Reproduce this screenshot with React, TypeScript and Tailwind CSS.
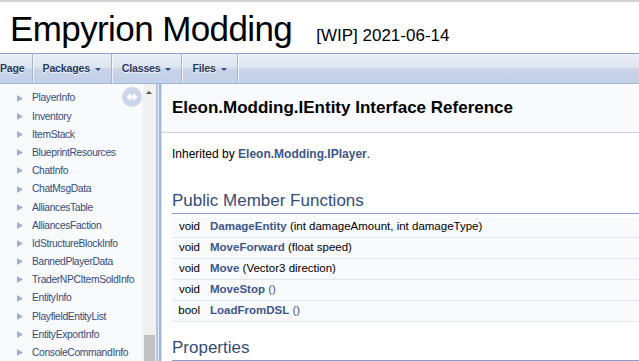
import React from 'react';

const treeItems = [
  'PlayerInfo',
  'Inventory',
  'ItemStack',
  'BlueprintResources',
  'ChatInfo',
  'ChatMsgData',
  'AlliancesTable',
  'AlliancesFaction',
  'IdStructureBlockInfo',
  'BannedPlayerData',
  'TraderNPCItemSoldInfo',
  'EntityInfo',
  'PlayfieldEntityList',
  'EntityExportInfo',
  'ConsoleCommandInfo',
];

const members = [
  { type: 'void', name: 'DamageEntity', args: '(int damageAmount, int damageType)' },
  { type: 'void', name: 'MoveForward', args: '(float speed)' },
  { type: 'void', name: 'Move', args: '(Vector3 direction)' },
  { type: 'void', name: 'MoveStop', args: '()' },
  { type: 'bool', name: 'LoadFromDSL', args: '()' },
];

const tabs = [
  { label: 'Page', first: true },
  { label: 'Packages', caret: true },
  { label: 'Classes', caret: true },
  { label: 'Files', caret: true },
];

export default function App() {
  return (
    <div className="w-[639px] h-[361px] overflow-hidden bg-white text-black font-['Liberation_Sans',Arial,sans-serif] flex flex-col">
      <div className="h-[2px] shrink-0 bg-[#d3d3d3]" />

      {/* Project title */}
      <div className="h-[51px] shrink-0 flex items-baseline pl-[10px] pt-[9px] whitespace-nowrap">
        <span className="text-[35px] leading-none tracking-[-0.6px]">Empyrion Modding</span>
        <span className="ml-[24px] text-[17px] leading-none">[WIP] 2021-06-14</span>
      </div>

      {/* Tabs bar */}
      <nav className="h-[31px] shrink-0 flex items-stretch overflow-hidden border-y border-t-[#8ea2cb] border-b-[#a7b7da] bg-[linear-gradient(to_bottom,#eaeef7_0%,#dde3f1_48%,#c9d4ea_52%,#c3cfe7_100%)] text-[10.6px] tracking-[-0.2px] font-bold text-[#283A5D] [text-shadow:0_1px_1px_rgba(255,255,255,0.9)]">
        {tabs.map((tab) => (
          <div
            key={tab.label}
            className={`flex items-center border-r border-[#a3b4d8] shadow-[1px_0_0_rgba(255,255,255,0.7)] ${
              tab.first ? 'pr-[7px]' : 'px-[10px]'
            }`}
          >
            <span>{tab.label}</span>
            {tab.caret && (
              <span className="ml-[5px] mt-[1px] w-0 h-0 border-x-[3px] border-x-transparent border-t-[3px] border-t-[#364D7C]" />
            )}
          </div>
        ))}
      </nav>

      <div className="flex-1 min-h-0 flex">
        {/* Nav tree */}
        <div className="w-[156px] shrink-0 flex bg-[#f9fafc] relative">
          <ul className="w-[143px] pt-[5px] overflow-hidden text-[10.3px] tracking-[-0.35px] text-[#364D7C]">
            {treeItems.map((item) => (
              <li key={item} className="h-[18.2px] flex items-center whitespace-nowrap">
                <svg width="6" height="7" viewBox="0 0 6 7" className="ml-[17px] shrink-0">
                  <polygon points="0,0 6,3.5 0,7" fill="#9CAFD4" />
                </svg>
                <span className="ml-[9px]">{item}</span>
              </li>
            ))}
          </ul>
          <div className="w-[13px] shrink-0 bg-[#f0f0f0] relative">
            <div className="absolute top-[7px] left-[3px] w-0 h-0 border-x-[3px] border-x-transparent border-b-[3px] border-b-[#505050]" />
            <div className="absolute bottom-0 left-[1px] right-[1px] h-[26px] bg-[#c1c1c1]" />
          </div>
          <svg width="20" height="20" viewBox="0 0 20 20" className="absolute left-[122px] top-[3px]">
            <circle cx="10" cy="10" r="10" fill="#cbd5eb" />
            <path d="M4.5 10 L8.5 6 V8.5 H11.5 V6 L15.5 10 L11.5 14 V11.5 H8.5 V14 Z" fill="#ffffff" />
          </svg>
        </div>

        {/* Split bar */}
        <div className="w-[6px] shrink-0 bg-[linear-gradient(to_right,#b8c6e3_0px,#b8c6e3_2px,#e4eaf5_2px,#e4eaf5_3px,#a2b4d9_3px,#a2b4d9_5px,#d6deef_5px,#d6deef_6px)]" />

        {/* Contents */}
        <div className="flex-1 min-w-0 flex flex-col whitespace-nowrap">
          <div className="h-[49px] shrink-0 flex items-center pl-[10px] bg-[#f9fafc] border-b border-[#c4cfe5] text-[17px] font-bold">
            Eleon.Modding.IEntity Interface Reference
          </div>

          <p className="mt-[13px] pl-[10px] text-[12px] leading-[16px]">
            Inherited by <a className="font-bold text-[#3D578C]">Eleon.Modding.IPlayer</a>.
          </p>

          <h2 className="mt-[29px] ml-[10px] pb-[2px] border-b border-[#879ECB] text-[17px] leading-[20px] text-[#354C7B]">
            Public Member Functions
          </h2>

          <div className="ml-[10px] mt-[3px]">
            {members.map((m) => (
              <div
                key={m.name}
                className="h-[21px] flex items-center bg-[#f9fafc] border-b border-[#dee4f0] text-[11.5px]"
              >
                <span className="w-[34px] shrink-0 pr-[6px] text-right">{m.type}</span>
                <span className="pl-[4px]">
                  <a className="font-bold text-[#3D578C]">{m.name}</a>{' '}
                  <span className={m.args === '()' ? 'text-[#3D578C]' : ''}>{m.args}</span>
                </span>
              </div>
            ))}
          </div>

          <h2 className="mt-[16px] ml-[10px] pb-[2px] border-b border-[#879ECB] text-[17px] leading-[20px] text-[#354C7B]">
            Properties
          </h2>
        </div>
      </div>
    </div>
  );
}
